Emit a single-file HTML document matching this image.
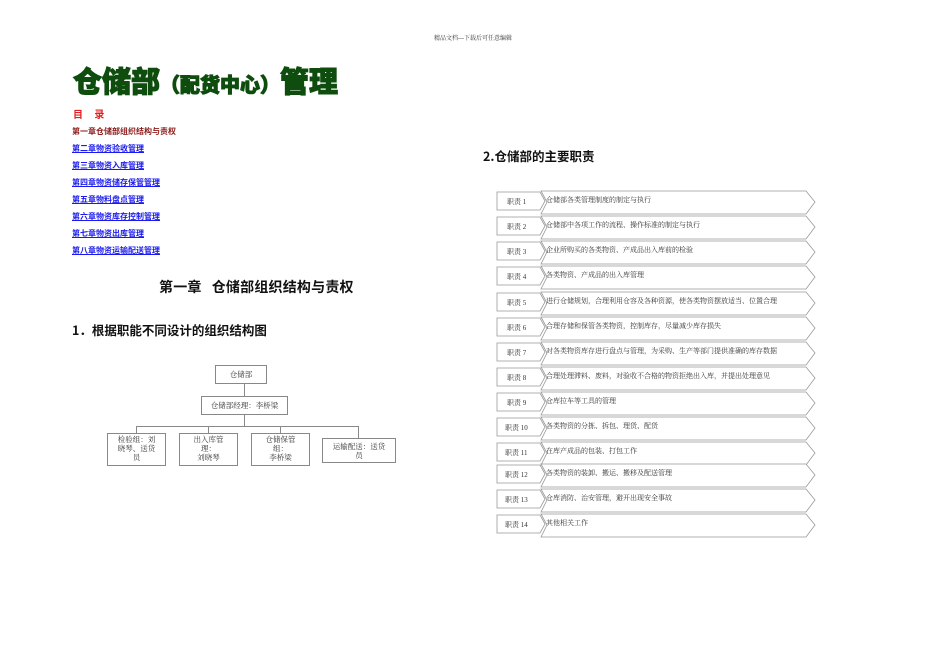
<!DOCTYPE html>
<html><head><meta charset="utf-8"><style>
body{margin:0;background:#fff;width:950px;height:672px;position:relative;overflow:hidden;font-family:"Liberation Serif","Noto Serif CJK SC",serif;}
.a{position:absolute;white-space:nowrap;}
.toc{position:absolute;left:72px;font-size:8px;font-weight:bold;color:#1a1aee;text-decoration:underline;font-family:"Liberation Sans","Noto Sans CJK SC",sans-serif;}
.box{position:absolute;border:1px solid #888;background:#fff;font-size:7.5px;color:#333;text-align:center;line-height:9px;}
</style></head><body>
<div class="a" style="left:434px;top:33px;font-size:6px;color:#333">精品文档---下载后可任意编辑</div>
<div class="a" style="left:73px;top:62px;font-size:29px;font-weight:900;color:#0e4d0e;font-family:'Noto Sans CJK SC',sans-serif;letter-spacing:0px;-webkit-text-stroke:1px #0e4d0e;line-height:36px">仓储部<span style="font-size:20px;letter-spacing:0px">（配货中心）</span>管理</div>
<div class="a" style="left:73px;top:106px;font-size:10px;font-weight:bold;color:#e02020;font-family:'Noto Sans CJK SC',sans-serif">目&nbsp;&nbsp;&nbsp;&nbsp;&nbsp;录</div>
<div class="toc" style="top:126px;color:#8b1a1a;text-decoration:none">第一章仓储部组织结构与责权</div>
<div class="toc" style="top:143px">第二章物资验收管理</div>
<div class="toc" style="top:160px">第三章物资入库管理</div>
<div class="toc" style="top:177px">第四章物资储存保管管理</div>
<div class="toc" style="top:194px">第五章物料盘点管理</div>
<div class="toc" style="top:211px">第六章物资库存控制管理</div>
<div class="toc" style="top:228px">第七章物资出库管理</div>
<div class="toc" style="top:245px">第八章物资运输配送管理</div>
<div class="a" style="left:159px;top:277px;font-size:14px;font-weight:bold;color:#111;font-family:'Noto Sans CJK SC',sans-serif;letter-spacing:0.2px">第一章&nbsp;&nbsp;&nbsp;仓储部组织结构与责权</div>
<div class="a" style="left:72px;top:320px;font-size:12.5px;font-weight:bold;color:#111;font-family:'Noto Sans CJK SC',sans-serif">1．根据职能不同设计的组织结构图</div>
<div class="a" style="left:483px;top:146px;font-size:12.5px;font-weight:bold;color:#111;font-family:'Noto Sans CJK SC',sans-serif">2.仓储部的主要职责</div>
<svg class="a" style="left:0;top:0" width="950" height="672">
<g stroke="#888" fill="none" stroke-width="1">
<line x1="244.5" y1="383" x2="244.5" y2="396"/>
<line x1="244.5" y1="414" x2="244.5" y2="426"/>
<line x1="136.5" y1="426.5" x2="358.5" y2="426.5"/>
<line x1="136.5" y1="426" x2="136.5" y2="433"/>
<line x1="208.5" y1="426" x2="208.5" y2="433"/>
<line x1="280.5" y1="426" x2="280.5" y2="433"/>
<line x1="358.5" y1="426" x2="358.5" y2="438"/>
</g>
<g stroke="#999" fill="#fff" stroke-width="0.8">
<polygon points="541,191 806,191 815,202 806,214 541,214 547,202"/>
<polygon points="541,216 806,216 815,227 806,239 541,239 547,227"/>
<polygon points="541,241 806,241 815,252 806,264 541,264 547,252"/>
<polygon points="541,266 806,266 815,277 806,289 541,289 547,277"/>
<polygon points="541,292 806,292 815,303 806,315 541,315 547,303"/>
<polygon points="541,317 806,317 815,328 806,340 541,340 547,328"/>
<polygon points="541,342 806,342 815,353 806,365 541,365 547,353"/>
<polygon points="541,367 806,367 815,378 806,390 541,390 547,378"/>
<polygon points="541,392 806,392 815,403 806,415 541,415 547,403"/>
<polygon points="541,417 806,417 815,428 806,440 541,440 547,428"/>
<polygon points="541,442 806,442 815,453 806,465 541,465 547,453"/>
<polygon points="541,464 806,464 815,475 806,487 541,487 547,475"/>
<polygon points="541,489 806,489 815,500 806,512 541,512 547,500"/>
<polygon points="541,514 806,514 815,525 806,537 541,537 547,525"/>
</g>
<g stroke="#999" fill="#fff" stroke-width="0.8">
<polygon points="497,192 540,192 545,201 540,210 497,210"/>
<polygon points="497,217 540,217 545,226 540,235 497,235"/>
<polygon points="497,242 540,242 545,251 540,260 497,260"/>
<polygon points="497,267 540,267 545,276 540,285 497,285"/>
<polygon points="497,293 540,293 545,302 540,311 497,311"/>
<polygon points="497,318 540,318 545,327 540,336 497,336"/>
<polygon points="497,343 540,343 545,352 540,361 497,361"/>
<polygon points="497,368 540,368 545,377 540,386 497,386"/>
<polygon points="497,393 540,393 545,402 540,411 497,411"/>
<polygon points="497,418 540,418 545,427 540,436 497,436"/>
<polygon points="497,443 540,443 545,452 540,461 497,461"/>
<polygon points="497,465 540,465 545,474 540,483 497,483"/>
<polygon points="497,490 540,490 545,499 540,508 497,508"/>
<polygon points="497,515 540,515 545,524 540,533 497,533"/>
</g>
<g font-size="7" fill="#333" font-family="Liberation Serif,Noto Serif CJK SC,serif">
<text x="507" y="204">职责 1</text><text x="507" y="229">职责 2</text><text x="507" y="254">职责 3</text><text x="507" y="279">职责 4</text><text x="507" y="305">职责 5</text><text x="507" y="330">职责 6</text><text x="507" y="355">职责 7</text><text x="507" y="380">职责 8</text><text x="507" y="405">职责 9</text><text x="505" y="430">职责 10</text><text x="505" y="455">职责 11</text><text x="505" y="477">职责 12</text><text x="505" y="502">职责 13</text><text x="505" y="527">职责 14</text>
</g>
<g font-size="7" fill="#333" font-family="Liberation Serif,Noto Serif CJK SC,serif">
<text x="546" y="202">仓储部各类管理制度的制定与执行</text>
<text x="546" y="227">仓储部中各项工作的流程、操作标准的制定与执行</text>
<text x="546" y="252">企业所购买的各类物资、产成品出入库前的检验</text>
<text x="546" y="277">各类物资、产成品的出入库管理</text>
<text x="546" y="303">进行仓储规划，合理利用仓容及各种资源，使各类物资摆放适当、位置合理</text>
<text x="546" y="328">合理存储和保管各类物资，控制库存，尽量减少库存损失</text>
<text x="546" y="353">对各类物资库存进行盘点与管理，为采购、生产等部门提供准确的库存数据</text>
<text x="546" y="378">合理处理滞料、废料，对验收不合格的物资拒绝出入库，并提出处理意见</text>
<text x="546" y="403">仓库拉车等工具的管理</text>
<text x="546" y="428">各类物资的分拣、拆包、理货、配货</text>
<text x="546" y="453">在库产成品的包装、打包工作</text>
<text x="546" y="475">各类物资的装卸、搬运、搬移及配送管理</text>
<text x="546" y="500">仓库消防、治安管理，避开出现安全事故</text>
<text x="546" y="525">其他相关工作</text>
</g>
</svg>
<div class="box" style="left:215px;top:365px;width:50px;height:17px;line-height:17px">仓储部</div>
<div class="box" style="left:201px;top:396px;width:85px;height:17px;line-height:17px">仓储部经理：李桥梁</div>
<div class="box" style="left:107px;top:433px;width:57px;height:30px;padding-top:1px">检验组：刘<br>晓琴、送货<br>员</div>
<div class="box" style="left:179px;top:433px;width:57px;height:30px;padding-top:1px">出入库管<br>理：<br>刘晓琴</div>
<div class="box" style="left:251px;top:433px;width:57px;height:30px;padding-top:1px">仓储保管<br>组：<br>李桥梁</div>
<div class="box" style="left:322px;top:438px;width:72px;height:20px;padding-top:3px">运输配送：送货<br>员</div>
</body></html>
